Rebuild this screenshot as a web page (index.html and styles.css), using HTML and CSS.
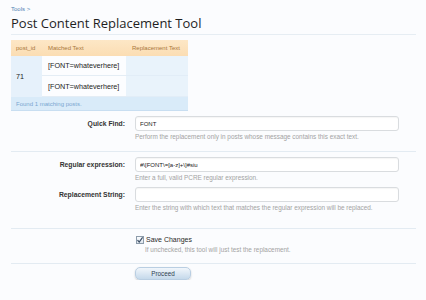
FILE: index.html
```html
<!DOCTYPE html>
<html lang="en">
<head>
    <meta charset="UTF-8">
    <title>Post Content Replacement Tool</title>
    <link rel="stylesheet" href="styles.css">
</head>
<body>
    <div class="page">
        <div class="breadcrumb"><a href="#">Tools &gt;</a></div>
        <h1 class="title">Post Content Replacement Tool</h1>

        <table class="matches">
            <colgroup>
                <col class="w-id">
                <col class="w-match">
                <col class="w-repl">
            </colgroup>
            <thead>
                <tr>
                    <th class="col-id">post_id</th>
                    <th class="col-match">Matched Text</th>
                    <th class="col-repl">Replacement Text</th>
                </tr>
            </thead>
            <tbody>
                <tr>
                    <td class="col-id" rowspan="2">71</td>
                    <td class="col-match first">[FONT=whateverhere]</td>
                    <td class="col-repl first"></td>
                </tr>
                <tr>
                    <td class="col-match">[FONT=whateverhere]</td>
                    <td class="col-repl"></td>
                </tr>
            </tbody>
            <tfoot>
                <tr>
                    <td colspan="3">Found 1 matching posts.</td>
                </tr>
            </tfoot>
        </table>

        <form class="tool-form">
            <div class="section first-section">
                <div class="form-row">
                    <label for="quickFind">Quick Find:</label>
                    <div class="control">
                        <input type="text" id="quickFind" value="FONT">
                        <p class="hint">Perform the replacement only in posts whose message contains this exact text.</p>
                    </div>
                </div>
            </div>
            <div class="section regex-section">
                <div class="form-row">
                    <label for="regex">Regular expression:</label>
                    <div class="control">
                        <input type="text" id="regex" value="#\[FONT\=[a-z]+\]#siu">
                        <p class="hint">Enter a full, valid PCRE regular expression.</p>
                    </div>
                </div>
                <div class="form-row next">
                    <label for="replace">Replacement String:</label>
                    <div class="control">
                        <input type="text" id="replace" value="">
                        <p class="hint">Enter the string with which text that matches the regular expression will be replaced.</p>
                    </div>
                </div>
            </div>
            <div class="section check-section">
                <div class="form-row">
                    <span></span>
                    <div class="control">
                        <label class="check">
                            <span class="box">
                                <svg width="8" height="8" viewBox="0 0 8 8"><path d="M1.5 4.2 L3.2 6 L6.6 1.4" fill="none" stroke="#3d4f66" stroke-width="1.2"/></svg>
                            </span>
                            <span class="check-text">Save Changes</span>
                        </label>
                        <p class="hint indent">If unchecked, this tool will just test the replacement.</p>
                    </div>
                </div>
            </div>
            <div class="section submit-section">
                <div class="form-row">
                    <span></span>
                    <div class="control">
                        <button type="button" class="button">Proceed</button>
                    </div>
                </div>
            </div>
        </form>
    </div>
</body>
</html>
```

FILE: styles.css
```css
body {
    margin: 0;
    background: #fbfcfe;
    font-family: 'Liberation Sans', Arial, sans-serif;
    color: #333;
}
.page {
    padding: 0 10px 0 11px;
}
.breadcrumb {
    padding-top: 5px;
    font-size: 6px;
    line-height: 8px;
    height: 10px;
}
.breadcrumb a {
    color: #4f82b3;
    text-decoration: none;
}
.title {
    margin: 0;
    font-family: 'Open Sans', sans-serif;
    font-weight: normal;
    font-size: 13px;
    line-height: 16px;
    color: #1f1f1f;
    padding: 0 0 3px 0;
    border-bottom: 1px solid #e6edf3;
}
.matches {
    margin-top: 5px;
    width: 177px;
    border-collapse: collapse;
    table-layout: fixed;
    font-size: 7.2px;
}
.w-id { width: 31px; }
.w-match { width: 84px; }
.w-repl { width: 62px; }
.matches th {
    height: 16px;
    padding: 0 6px;
    background: linear-gradient(#fde7c6, #fbddb3);
    color: #a8773c;
    font-size: 6px;
    font-weight: normal;
    text-align: left;
}
.matches .col-id {
    padding-left: 5px;
}
.matches td {
    padding: 0 6px;
    height: 20px;
    color: #222;
}
.matches td.col-id {
    background: #e6f1fb;
    padding-left: 5px;
}
.matches td.col-match {
    background: #fcfdff;
    border-bottom: 1px solid #e4edf5;
}
.matches td.col-repl {
    background: #e9f3fb;
    border-bottom: 1px solid #e2edf7;
}
.matches td.first {
    height: 19px;
}
.matches tfoot td {
    height: 13px;
    padding: 0 5px;
    background: #d9ebf9;
    border-bottom: 1px solid #c8def1;
    color: #7aa7d0;
    font-size: 6px;
}
.section {
    border-top: 1px solid #e3ebf2;
}
.first-section {
    border-top: none;
    padding: 5px 0 10px;
}
.regex-section {
    padding: 5px 0 16px;
}
.check-section {
    padding: 6px 0 9px;
}
.submit-section {
    padding: 3px 0 0;
}
.form-row {
    display: grid;
    grid-template-columns: 114px 264px;
    column-gap: 10px;
}
.form-row.next {
    margin-top: 5px;
}
.form-row > label {
    text-align: right;
    font-weight: bold;
    font-size: 6.8px;
    line-height: 15px;
    color: #333;
}
.control input {
    display: block;
    box-sizing: border-box;
    width: 264px;
    height: 15px;
    margin: 0;
    padding: 0 4px;
    border: 1px solid #d9dcdf;
    border-radius: 3px;
    background: #fff;
    box-shadow: inset 0 1px 1px #0000000a;
    font-family: 'Liberation Sans', Arial, sans-serif;
    font-size: 6px;
    color: #222;
    outline: none;
}
.hint {
    margin: 2px 0 0;
    font-size: 6.4px;
    line-height: 8px;
    color: #a3a3a3;
    white-space: nowrap;
}
.hint.indent {
    padding-left: 10px;
}
.check {
    display: flex;
    align-items: center;
    height: 9px;
}
.box {
    display: block;
    box-sizing: border-box;
    width: 8px;
    height: 8px;
    margin-left: 1px;
    border: 1px solid #8d9cab;
    background: linear-gradient(#fafcfe, #dfe6ee);
    position: relative;
}
.box svg {
    position: absolute;
    left: -1px;
    top: -1px;
}
.check-text {
    margin-left: 2px;
    font-size: 7px;
    color: #2a2a2a;
}
.button {
    display: block;
    width: 56px;
    height: 13px;
    padding: 0;
    border: 1px solid #b9cee2;
    border-radius: 5px;
    background: linear-gradient(#f1f6fb, #c5d9eb);
    box-shadow: 0 1px 2px #00000030;
    font-family: 'Liberation Sans', Arial, sans-serif;
    font-size: 6.3px;
    color: #2c3e52;
    cursor: pointer;
}
```
